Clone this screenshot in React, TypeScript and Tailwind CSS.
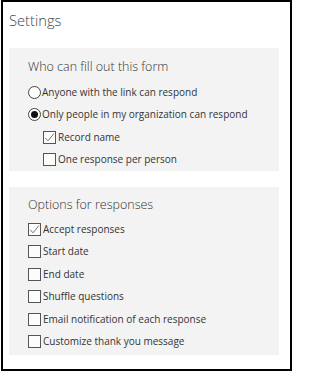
import type { ReactNode } from 'react';

const font = { fontFamily: '"Open Sans", "Liberation Sans", sans-serif' };

const Radio = ({ checked, children }: { checked?: boolean; children: ReactNode }) => (
  <div className="flex h-[22.5px] items-center">
    <span className="flex h-[13px] w-[13px] shrink-0 items-center justify-center rounded-full border border-[#444] bg-white">
      {checked && <span className="h-[7px] w-[7px] rounded-full bg-[#111]" />}
    </span>
    <span className="ml-px text-[10px] text-[#333]">{children}</span>
  </div>
);

const Check = ({ checked, children }: { checked?: boolean; children: ReactNode }) => (
  <div className="flex h-[22.5px] items-center">
    <span className="flex h-[13px] w-[13px] shrink-0 items-center justify-center border border-[#555] bg-[#fcfcfc]">
      {checked && (
        <svg width="11" height="11" viewBox="0 0 11 11" fill="none">
          <path d="M1.2 5.8 L4 8.8 L10 1.5" stroke="#666" strokeWidth="0.9" />
        </svg>
      )}
    </span>
    <span className="ml-[2px] text-[10px] text-[#333]">{children}</span>
  </div>
);

export default function App() {
  return (
    <div className="bg-white" style={font}>
      <div className="ml-px h-[371px] w-[291px] border-2 border-black">
        <div className="ml-[6px] mt-[6px] h-[24px] text-[14.7px] font-light leading-[24px] text-[#444]">
          Settings
        </div>

        <div className="ml-[6px] mt-[16px] w-[270px] bg-[#f3f3f3] pl-[19px] pt-[9px]">
          <div className="h-[20px] text-[12.5px] font-light leading-[20px] text-[#333]">
            Who can fill out this form
          </div>
          <div className="mt-1">
            <Radio>Anyone with the link can respond</Radio>
            <Radio checked>Only people in my organization can respond</Radio>
            <div className="pl-[15px]">
              <Check checked>Record name</Check>
              <Check>One response per person</Check>
            </div>
          </div>
        </div>

        <div className="ml-[6px] mt-[16px] w-[270px] bg-[#f3f3f3] pb-[2px] pl-[19px] pt-[8px]">
          <div className="h-[20px] text-[12.5px] font-light leading-[20px] text-[#333]">
            Options for responses
          </div>
          <div className="mt-[3px]">
            <Check checked>Accept responses</Check>
            <Check>Start date</Check>
            <Check>End date</Check>
            <Check>Shuffle questions</Check>
            <Check>Email notification of each response</Check>
            <Check>Customize thank you message</Check>
          </div>
        </div>
      </div>
    </div>
  );
}
